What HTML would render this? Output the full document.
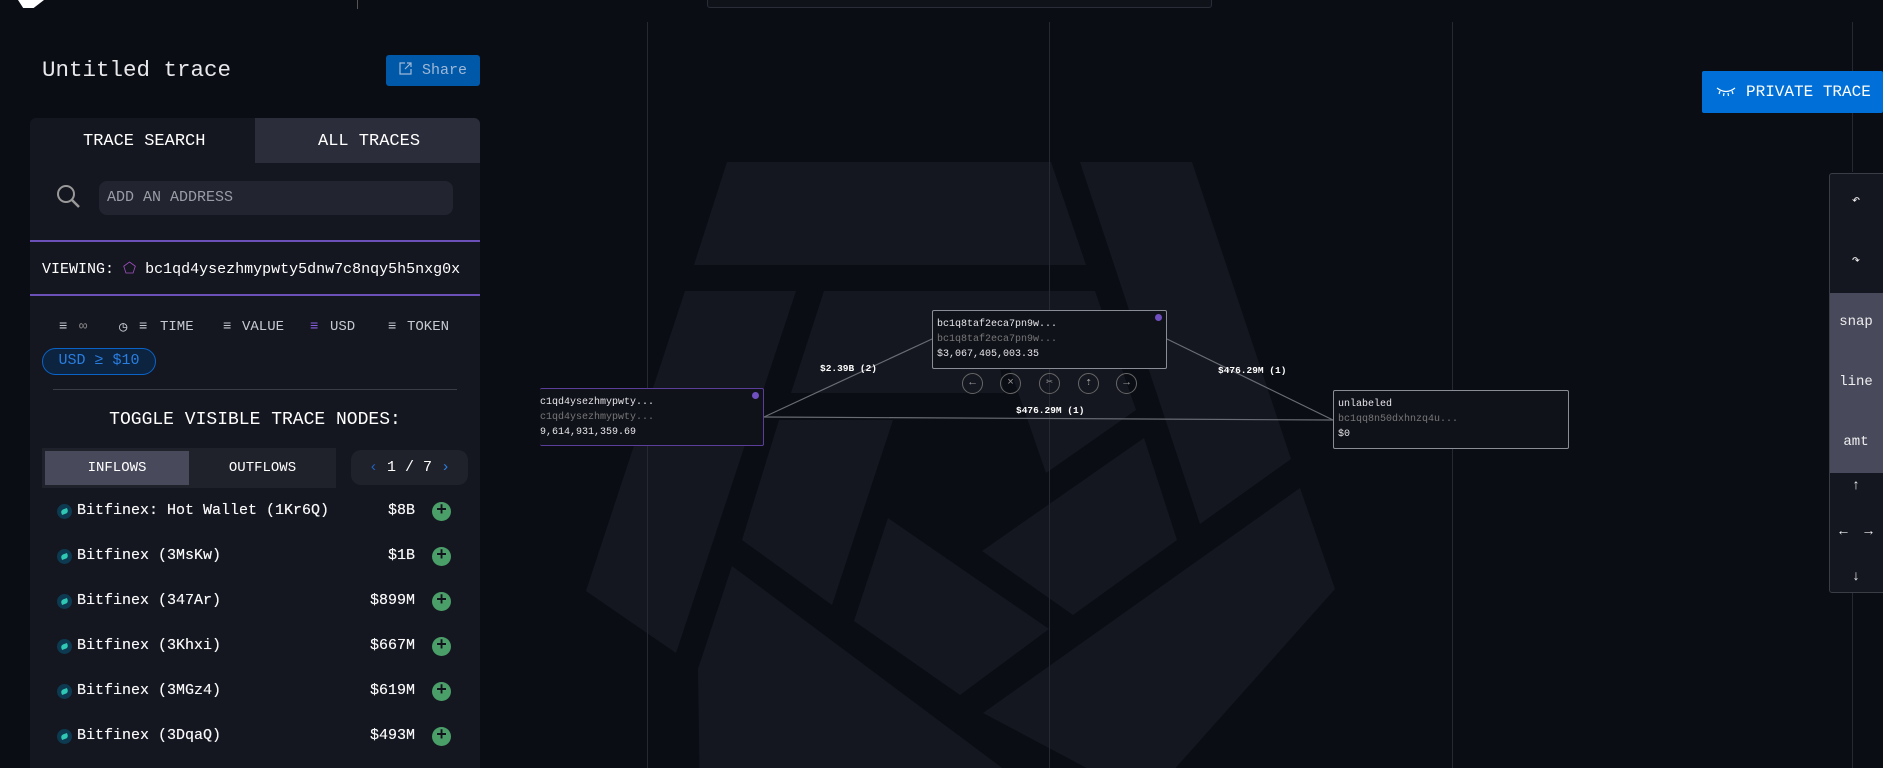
<!DOCTYPE html>
<html><head><meta charset="utf-8"><style>
*{box-sizing:border-box;margin:0;padding:0}
body{width:1883px;height:768px;overflow:hidden;background:#0b0d15;font-family:"Liberation Mono","DejaVu Sans Mono",monospace;color:#e6e6ea;position:relative}
.abs{position:absolute}
.gl{position:absolute;top:22px;bottom:0;width:1px;background:#262834}
.panel{position:absolute;left:30px;top:118px;width:450px;height:650px;background:#141620;border-radius:6px 6px 0 0}
.row{position:absolute;left:57px;width:394px;height:24px;font-size:15px;line-height:24px;color:#f8f8f8;text-shadow:0 0 0.4px #fff}
.row .ic{position:absolute;left:0;top:5px;width:15px;height:15px;border-radius:50%;background:#0d3a50}
.row .ic:after{content:"";position:absolute;left:4px;top:5px;width:7px;height:5px;background:#2fc7b3;border-radius:3px 0 3px 0;transform:rotate(-20deg)}
.row .nm{position:absolute;left:20px}
.row .am{position:absolute;right:36px}
.row .pl{position:absolute;right:0;top:3px;width:19px;height:19px;border-radius:50%;background:#4a9e68;color:#10141a;font-size:18px;line-height:18px;text-align:center;font-weight:bold}
.node{position:absolute;background:#10121a;border:1px solid #8a8c96;border-radius:2px;font-size:10px;line-height:15px;padding:6px 4px}
.node .g{color:#777}
.lbl{position:absolute;font-size:9.5px;color:#fff;font-weight:bold}
.cb{position:absolute;width:21px;height:21px;border:1px solid #666;border-radius:50%;color:#999;font-size:11px;line-height:19px;text-align:center}
.rc{position:absolute;left:1829px;width:54px;text-align:center;color:#eee;font-size:14px}
.f{position:absolute;top:319px;font-size:14px;color:#c8cad2}
</style></head><body>
<svg class="abs" style="left:0;top:0" width="1883" height="768">
<g fill="#151720">
<polygon points="727,162 1051,162 1086,265 694,265"/>
<polygon points="1080,162 1192,162 1291,459 1200,524"/>
<polygon points="685,291 796,291 676,653 586,591"/>
<polygon points="824,291 988,291 1004,393 791,393"/>
<polygon points="983,291 1095,291 1136,410 1046,473"/>
<polygon points="779,420 893,420 832,605 742,540"/>
<polygon points="888,518 1049,629 960,695 854,621"/>
<polygon points="982,551 1144,438 1177,540 1073,615"/>
<polygon points="732,566 1045,800 700,800 698,669"/>
<polygon points="1300,488 1335,589 1147,800 983,713"/>
</g>
</svg>
<div class="gl" style="left:647px"></div>
<div class="gl" style="left:1049px"></div>
<div class="gl" style="left:1452px"></div>
<div class="gl" style="left:1852px;top:22px;height:150px"></div>
<div class="gl" style="left:1852px;top:593px"></div>
<div class="abs" style="left:18px;top:0;width:26px;height:8px;background:#fff;clip-path:polygon(0 0,100% 0,60% 100%,20% 100%)"></div>
<div class="abs" style="left:357px;top:0;width:1px;height:9px;background:#555"></div>
<div class="abs" style="left:707px;top:-4px;width:505px;height:12px;border:1px solid #2a2c38;border-radius:3px;background:#10121a"></div>
<div class="abs" style="left:42px;top:57px;font-size:22.5px;color:#e8e8ec">Untitled trace</div>
<div class="abs" style="left:386px;top:55px;width:94px;height:31px;background:#0058a8;border-radius:3px;color:#9fb8d6;font-size:15px;line-height:31px;padding-left:36px">Share</div>
<svg class="abs" style="left:399px;top:62px" width="13" height="13"><path d="M6 1H1v11h11V7M8 1h4v4M12 1L6 7" fill="none" stroke="#9fb8d6" stroke-width="1.2"/></svg>
<div class="panel"></div>
<div class="abs" style="left:255px;top:118px;width:225px;height:45px;background:#2b2d3a;border-radius:0 6px 0 0"></div>
<div class="abs" style="left:83px;top:132px;font-size:17px;color:#fff">TRACE SEARCH</div>
<div class="abs" style="left:318px;top:132px;font-size:17px;color:#fff">ALL TRACES</div>
<svg class="abs" style="left:56px;top:184px" width="26" height="26"><circle cx="10" cy="10" r="8" fill="none" stroke="#999" stroke-width="2"/><path d="M16 16l7 7" stroke="#999" stroke-width="2.5"/></svg>
<div class="abs" style="left:99px;top:181px;width:354px;height:34px;background:#22242f;border-radius:8px;font-size:15px;line-height:34px;padding-left:8px;color:#9a9ca6">ADD AN ADDRESS</div>
<div class="abs" style="left:30px;top:240px;width:450px;height:2px;background:#6a50b8"></div>
<div class="abs" style="left:30px;top:294px;width:450px;height:2px;background:#6a50b8"></div>
<div class="abs" style="left:42px;top:259px;font-size:15px;color:#fff;white-space:nowrap">VIEWING: <span style="color:#a050c0">⬠</span> bc1qd4ysezhmypwty5dnw7c8nqy5h5nxg0x</div>
<div class="f" style="left:59px">≡</div>
<div class="f" style="left:79px;color:#888">∞</div>
<div class="f" style="left:119px">◷</div>
<div class="f" style="left:139px">≡</div>
<div class="f" style="left:160px">TIME</div>
<div class="f" style="left:223px">≡</div>
<div class="f" style="left:242px">VALUE</div>
<div class="f" style="left:310px;color:#8a60e0">≡</div>
<div class="f" style="left:330px">USD</div>
<div class="f" style="left:388px">≡</div>
<div class="f" style="left:407px">TOKEN</div>
<div class="abs" style="left:42px;top:348px;width:114px;height:27px;border:1.5px solid #0a64c8;border-radius:14px;background:#0c2440;color:#2a7ee0;font-size:15px;line-height:24px;text-align:center">USD ≥ $10</div>
<div class="abs" style="left:53px;top:389px;width:404px;height:1px;background:#3a3c46"></div>
<div class="abs" style="left:30px;top:410px;width:450px;text-align:center;font-size:18px;color:#fff">TOGGLE VISIBLE TRACE NODES:</div>
<div class="abs" style="left:42px;top:448px;width:294px;height:40px;background:#1f212b"></div>
<div class="abs" style="left:45px;top:451px;width:144px;height:34px;background:#484a5c;color:#fff;font-size:14px;line-height:34px;text-align:center">INFLOWS</div>
<div class="abs" style="left:189px;top:451px;width:147px;height:34px;color:#fff;font-size:14px;line-height:34px;text-align:center">OUTFLOWS</div>
<div class="abs" style="left:351px;top:450px;width:117px;height:35px;background:#1f212b;border-radius:10px;color:#fff;font-size:15px;line-height:35px;text-align:center"><span style="color:#2060c0">‹</span>&nbsp;1 / 7&nbsp;<span style="color:#2a7ee0">›</span></div>
<div class="row" style="top:499px"><div class="ic"></div><span class="nm">Bitfinex: Hot Wallet (1Kr6Q)</span><span class="am">$8B</span><div class="pl">+</div></div>
<div class="row" style="top:544px"><div class="ic"></div><span class="nm">Bitfinex (3MsKw)</span><span class="am">$1B</span><div class="pl">+</div></div>
<div class="row" style="top:589px"><div class="ic"></div><span class="nm">Bitfinex (347Ar)</span><span class="am">$899M</span><div class="pl">+</div></div>
<div class="row" style="top:634px"><div class="ic"></div><span class="nm">Bitfinex (3Khxi)</span><span class="am">$667M</span><div class="pl">+</div></div>
<div class="row" style="top:679px"><div class="ic"></div><span class="nm">Bitfinex (3MGz4)</span><span class="am">$619M</span><div class="pl">+</div></div>
<div class="row" style="top:724px"><div class="ic"></div><span class="nm">Bitfinex (3DqaQ)</span><span class="am">$493M</span><div class="pl">+</div></div>
<svg class="abs" style="left:0;top:0" width="1883" height="768">
<g stroke="#6a6c74" stroke-width="1.2" fill="none">
<line x1="764" y1="417" x2="932" y2="339"/>
<line x1="1167" y1="339" x2="1333" y2="420"/>
<line x1="764" y1="417" x2="1333" y2="420"/>
</g></svg>
<div class="lbl" style="left:820px;top:363px">$2.39B (2)</div>
<div class="lbl" style="left:1218px;top:365px">$476.29M (1)</div>
<div class="lbl" style="left:1016px;top:405px">$476.29M (1)</div>
<div class="node" style="left:540px;top:388px;width:224px;height:58px;border-color:#5a3e9a;border-left:none;padding-left:0;white-space:nowrap;overflow:hidden"><div>c1qd4ysezhmypwty...</div><div class="g">c1qd4ysezhmypwty...</div><div>9,614,931,359.69</div><div class="abs" style="right:4px;top:3px;width:7px;height:7px;border-radius:50%;background:#7050c0"></div></div>
<div class="node" style="left:932px;top:310px;width:235px;height:59px"><div>bc1q8taf2eca7pn9w...</div><div class="g">bc1q8taf2eca7pn9w...</div><div>$3,067,405,003.35</div><div class="abs" style="right:4px;top:3px;width:7px;height:7px;border-radius:50%;background:#7050c0"></div></div>
<div class="node" style="left:1333px;top:390px;width:236px;height:59px"><div>unlabeled</div><div class="g">bc1qq8n50dxhnzq4u...</div><div>$0</div></div>
<div class="cb" style="left:962px;top:373px">←</div>
<div class="cb" style="left:1000px;top:373px">×</div>
<div class="cb" style="left:1039px;top:373px">✂</div>
<div class="cb" style="left:1078px;top:373px">⇡</div>
<div class="cb" style="left:1116px;top:373px">→</div>
<div class="abs" style="left:1702px;top:71px;width:181px;height:42px;background:#0070d8;border-radius:2px;color:#fff;font-size:16px;line-height:42px;padding-left:44px">PRIVATE TRACE</div>
<svg class="abs" style="left:1716px;top:86px" width="20" height="12"><path d="M1 2q9 7 18 0M4 5l-1 3M8 7l-.5 3M12 7l.5 3M16 5l1 3" stroke="#fff" fill="none" stroke-width="1.2"/></svg>
<div class="abs" style="left:1829px;top:173px;width:60px;height:420px;background:#141620;border:1px solid #3a3c46;border-radius:3px"></div>
<div class="abs" style="left:1830px;top:293px;width:60px;height:180px;background:#484a5c"></div>
<div class="rc" style="top:192px">↶</div>
<div class="rc" style="top:252px">↷</div>
<div class="rc" style="top:314px">snap</div>
<div class="rc" style="top:374px">line</div>
<div class="rc" style="top:434px">amt</div>
<div class="rc" style="top:478px">↑</div>
<div class="rc" style="top:524px;white-space:nowrap">←&nbsp;&nbsp;→</div>
<div class="rc" style="top:569px">↓</div>
</body></html>
